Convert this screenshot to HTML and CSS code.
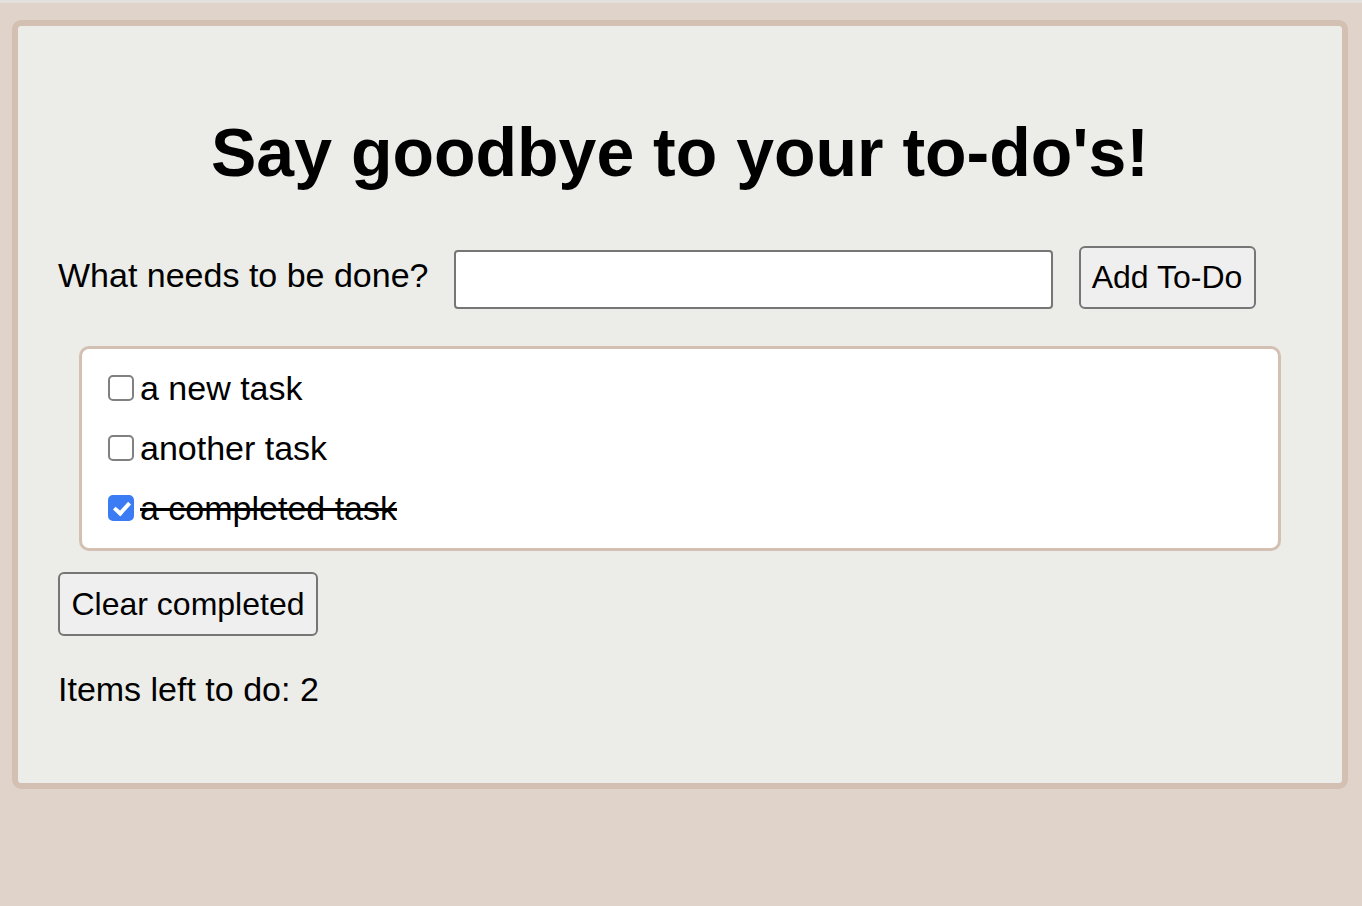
FILE: index.html
```html
<!DOCTYPE html>
<html lang="en">
<head>
<meta charset="utf-8">
<title>To-Do</title>
<link rel="stylesheet" href="styles.css">
</head>
<body>
<div class="app">
  <h1 class="title">Say goodbye to your to-do's!</h1>
  <form class="add-row" onsubmit="return false">
    <label class="add-label" for="new-todo">What needs to be done?</label>
    <input class="add-input" id="new-todo" type="text">
    <button class="btn btn-add" type="submit">Add To-Do</button>
  </form>
  <div class="todo-list">
    <label class="todo-item"><input class="todo-check" type="checkbox"><span class="todo-text">a new task</span></label>
    <label class="todo-item"><input class="todo-check" type="checkbox"><span class="todo-text">another task</span></label>
    <label class="todo-item"><input class="todo-check" type="checkbox" checked><span class="todo-text done">a completed task</span></label>
  </div>
  <button class="btn btn-clear" type="button">Clear completed</button>
  <p class="count">Items left to do: 2</p>
</div>
</body>
</html>
```
FILE: styles.css
```css
html {
  background: #e0d4ca;
}
body {
  margin: 0;
  border-top: 3px solid #e3e1dd;
  font-family: "Liberation Sans", Arial, Helvetica, sans-serif;
  font-size: 34px;
  color: #000;
}
.app {
  margin: 17px 14px 0 12px;
  background: #ecede8;
  border: 6px solid #d4c0b3;
  border-radius: 9px;
  padding: 40px;
}
.title {
  font-size: 68px;
  font-weight: bold;
  text-align: center;
  margin: 47px 0 55px;
}
.add-row {
  display: flex;
  align-items: flex-end;
  gap: 26px;
  margin: 0;
}
.add-label {
  margin-bottom: 14px;
}
.add-input {
  box-sizing: border-box;
  width: 599px;
  height: 59px;
  margin: 0 0 0 -1px;
  border: 2px solid #767676;
  border-radius: 4px;
  background: #fff;
  font: inherit;
  padding: 0 6px;
}
.btn {
  box-sizing: border-box;
  font-family: "Liberation Sans", Arial, Helvetica, sans-serif;
  font-size: 32px;
  color: #000;
  background: #efefef;
  border: 2px solid #767676;
  border-radius: 6px;
  padding: 0;
  margin: 0;
  white-space: nowrap;
}
.btn-add {
  height: 63px;
  width: 177px;
}
.todo-list {
  margin: 37px 21px 21px;
  background: #fff;
  border: 3px solid #d4c0b3;
  border-radius: 10px;
  padding: 9px 18px 10px;
  display: flex;
  flex-direction: column;
}
.todo-item {
  display: flex;
  align-items: center;
  height: 60px;
}
.todo-check {
  appearance: none;
  -webkit-appearance: none;
  box-sizing: border-box;
  position: relative;
  width: 26px;
  height: 26px;
  margin: 0 6px 0 8px;
  border: 2px solid #808080;
  border-radius: 5px;
  background: #fff;
}
.todo-check:checked {
  background: #3b7cf5;
  border-color: #3b7cf5;
}
.todo-check:checked::before {
  content: "";
  position: absolute;
  left: 7px;
  top: 2px;
  width: 6px;
  height: 12px;
  border: solid #fff;
  border-width: 0 4px 4px 0;
  transform: rotate(42deg);
}
.done {
  text-decoration: line-through;
}
.btn-clear {
  display: block;
  width: 260px;
  height: 64px;
}
.count {
  margin: 34px 0;
}
```
